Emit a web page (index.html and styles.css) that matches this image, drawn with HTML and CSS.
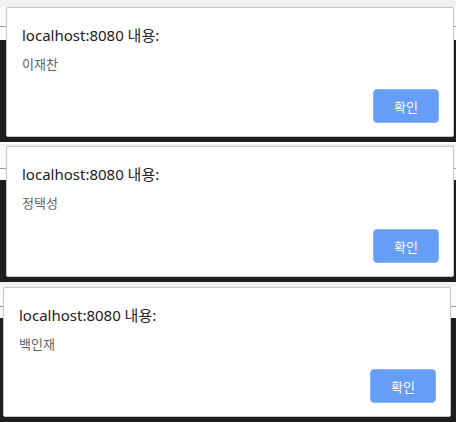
FILE: index.html
```html
<!DOCTYPE html>
<html lang="ko">
<head>
<meta charset="utf-8">
<link rel="stylesheet" href="styles.css">
</head>
<body>
<div class="stack">
  <section class="shot shot-1">
    <div class="dialog">
      <h1 class="title">localhost:8080 내용:</h1>
      <p class="msg">이재찬</p>
      <div class="actions"><button class="ok">확인</button></div>
    </div>
  </section>
  <div class="sep"></div>
  <section class="shot shot-2">
    <div class="dialog">
      <h1 class="title">localhost:8080 내용:</h1>
      <p class="msg">정택성</p>
      <div class="actions"><button class="ok">확인</button></div>
    </div>
  </section>
  <section class="shot shot-3">
    <div class="dialog">
      <h1 class="title">localhost:8080 내용:</h1>
      <p class="msg">백인재</p>
      <div class="actions"><button class="ok">확인</button></div>
    </div>
  </section>
</div>
</body>
</html>
```
FILE: styles.css
```css
* { box-sizing: border-box; }
html, body { margin: 0; padding: 0; background: #ffffff; }
body { width: 456px; height: 422px; overflow: hidden; font-family: "Noto Sans", "Noto Sans CJK KR", sans-serif; }

.stack { display: flex; flex-direction: column; }

.shot {
  display: flex;
  flex-direction: column;
  background:
    linear-gradient(to bottom, #f1f1f1 0, #f1f1f1 7px, #fbfbfb 7px, #fbfbfb 26px, #9a9a9a 26px, #9a9a9a 27px, #ffffff 27px, #ffffff 40px, #1e1e1e 40px);
}
.shot-1 { height: 142px; padding: 7px 2px 5px 6px; }
.sep { height: 2px; background: #ffffff; }
.shot-2 { height: 138px; padding: 2px 2px 5px 6px; background:
    linear-gradient(to bottom, #eeeeee 0, #eeeeee 2px, #fbfbfb 2px, #fbfbfb 24px, #9a9a9a 24px, #9a9a9a 25px, #ffffff 25px, #ffffff 36px, #1e1e1e 36px); }
.shot-3 { height: 140px; padding: 5px 5px 5px 3px; background:
    linear-gradient(to bottom, #f1f1f1 0, #f1f1f1 5px, #fbfbfb 5px, #fbfbfb 24px, #9a9a9a 24px, #9a9a9a 25px, #ffffff 25px, #ffffff 36px, #1e1e1e 36px); }

.dialog {
  flex: 1;
  background: #ffffff;
  border: 1px solid #c8c8c8;
  border-radius: 2px;
  box-shadow: 0 0 1px rgba(0,0,0,0.2);
  display: flex;
  flex-direction: column;
  padding: 16px 14px 13px 15px;
}

.title {
  margin: 0;
  font-size: 15px;
  font-weight: 400;
  line-height: 22px;
  color: #202124;
}

.msg {
  margin: 9px 0 0 0;
  font-size: 13px;
  line-height: 18px;
  color: #5f6368;
}

.actions {
  margin-top: auto;
  display: flex;
  justify-content: flex-end;
}

.ok {
  width: 66px;
  height: 34px;
  border: 1px solid #8ab4f8;
  border-radius: 4px;
  background: #669df6;
  color: #ffffff;
  font-family: "Noto Sans CJK KR", sans-serif;
  font-size: 13px;
  font-weight: 400;
  padding: 0;
}
```
